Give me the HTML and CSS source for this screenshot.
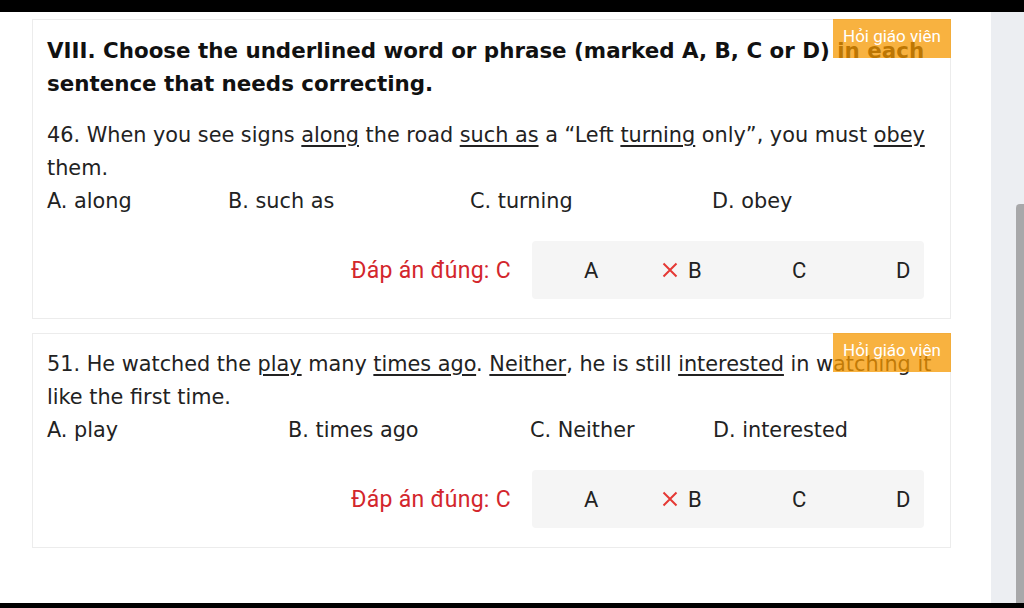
FILE: index.html
```html
<!DOCTYPE html>
<html lang="vi">
<head>
<meta charset="utf-8">
<title>Bài tập</title>
<link rel="stylesheet" href="styles.css">
</head>
<body>
<div class="topbar"></div>
<div class="main">
  <div class="content">
    <section class="card">
      <div class="badge">Hỏi giáo viên</div>
      <h2 class="title">VIII. Choose the underlined word or phrase (marked A, B, C or D) in each sentence that needs correcting.</h2>
      <p class="question">46. When you see signs <u>along</u> the road <u>such as</u> a “Left <u>turning</u> only”, you must <u>obey</u> them.</p>
      <div class="options opts-46">
        <span>A. along</span>
        <span>B. such as</span>
        <span>C. turning</span>
        <span>D. obey</span>
      </div>
      <div class="answer-row">
        <span class="answer-label">Đáp án đúng: C</span>
        <div class="choices">
          <span class="choice">A</span>
          <span class="choice"><svg class="wrong" viewBox="0 0 16 16" width="16" height="16"><path d="M1.5 1.5L14.5 14.5M14.5 1.5L1.5 14.5" stroke="#e53935" stroke-width="2" fill="none"/></svg>B</span>
          <span class="choice">C</span>
          <span class="choice">D</span>
        </div>
      </div>
    </section>
    <section class="card">
      <div class="badge">Hỏi giáo viên</div>
      <p class="question first">51. He watched the <u>play</u> many <u>times ago</u>. <u>Neither</u>, he is still <u>interested</u> in watching it like the first time.</p>
      <div class="options opts-51">
        <span>A. play</span>
        <span>B. times ago</span>
        <span>C. Neither</span>
        <span>D. interested</span>
      </div>
      <div class="answer-row">
        <span class="answer-label">Đáp án đúng: C</span>
        <div class="choices">
          <span class="choice">A</span>
          <span class="choice"><svg class="wrong" viewBox="0 0 16 16" width="16" height="16"><path d="M1.5 1.5L14.5 14.5M14.5 1.5L1.5 14.5" stroke="#e53935" stroke-width="2" fill="none"/></svg>B</span>
          <span class="choice">C</span>
          <span class="choice">D</span>
        </div>
      </div>
    </section>
  </div>
  <div class="rail"><div class="thumb"></div></div>
</div>
<div class="bottombar"></div>
</body>
</html>
```
FILE: styles.css
```css
* { box-sizing: border-box; }
html, body { margin: 0; padding: 0; }
body {
  width: 1024px;
  height: 608px;
  overflow: hidden;
  background: #ffffff;
  font-family: "DejaVu Sans", Verdana, sans-serif;
  color: #222;
  display: flex;
  flex-direction: column;
}
.topbar { height: 12px; background: #000; flex: none; }
.bottombar { height: 5px; background: #000; flex: none; }
.main { flex: 1; display: flex; min-height: 0; }
.content {
  flex: 1;
  padding: 7px 40px 0 32px;
  display: flex;
  flex-direction: column;
  gap: 14px;
}
.rail {
  width: 33px;
  background: #eceef2;
  display: flex;
  flex-direction: column;
  align-items: flex-end;
  padding-top: 192px;
}
.thumb {
  width: 8px;
  flex: 1;
  background: #a8a8aa;
  border-radius: 4px 0 0 0;
}
.card {
  position: relative;
  border: 1px solid #ececec;
  padding: 14px 13px 19px 14px;
  background: #fff;
}
.badge {
  position: absolute;
  top: -1px;
  right: -1px;
  width: 118px;
  height: 39px;
  padding: 7px 0 0 10px;
  background: rgba(246, 152, 0, 0.75);
  color: #fff;
  font-family: Roboto, "Noto Sans", sans-serif;
  font-size: 17px;
  line-height: 20px;
  white-space: nowrap;
  overflow: hidden;
}
.title {
  margin: 0 0 19px;
  font-size: 21.4px;
  font-weight: bold;
  line-height: 33px;
  color: #111;
}
.question {
  margin: 0;
  font-size: 20.8px;
  line-height: 33px;
  color: #222;
}
.question u {
  text-decoration-thickness: 1.5px;
  text-underline-offset: 3px;
}
.options {
  display: grid;
  font-size: 20.8px;
  line-height: 33px;
  color: #222;
}
.opts-46 { grid-template-columns: 181px 242px 242px auto; }
.opts-51 { grid-template-columns: 241px 242px 183px auto; }
.answer-row {
  margin-top: 23px;
  display: flex;
  justify-content: flex-end;
  align-items: center;
  padding-right: 13px;
  gap: 21px;
}
.answer-label {
  font-family: Roboto, "Noto Sans", sans-serif;
  font-size: 23px;
  letter-spacing: 0.3px;
  color: #d3262c;
}
.choices {
  width: 392px;
  height: 58px;
  background: #f5f5f5;
  border-radius: 4px;
  display: flex;
  align-items: center;
  padding-left: 52px;
  font-family: Roboto, "Noto Sans", sans-serif;
  font-size: 22px;
  color: #222;
}
.choice {
  width: 104px;
  display: flex;
  align-items: center;
}
.choice:last-child { width: auto; }
.wrong { margin-left: -26px; margin-right: 10px; }
```
